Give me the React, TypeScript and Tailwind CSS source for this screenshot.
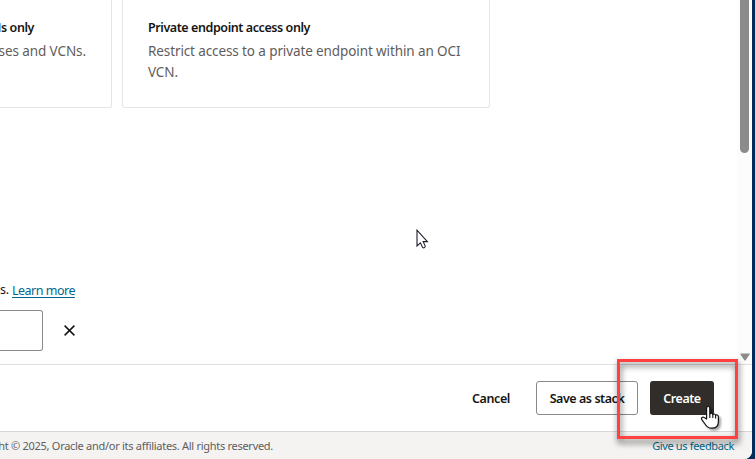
import React from "react";

function ArrowCursor() {
  return (
    <svg className="absolute left-[416px] top-[229px]" width="14" height="21" viewBox="0 0 14 21">
      <path d="M1 1.2V17L4.4 13.8L6.6 18.4Q8.4 19.6 9.3 17.4L7.2 12.6H11.4Z" fill="#fff" stroke="#1d1d2b" strokeWidth="1.1" />
    </svg>
  );
}

function HandCursor() {
  return (
    <svg className="absolute left-[700px] top-[405px] drop-shadow-[2px_2px_1px_rgba(0,0,0,0.35)]" width="20" height="25" viewBox="0 0 20 25">
      <path
        d="M6.6 14V3.2C6.6 .9 9.8 .9 9.8 3.2V9.2C10.2 7.7 12.7 7.9 12.8 9.7C13.3 8.4 15.5 8.8 15.6 10.4C16.4 9.3 18.4 10 18.4 11.8V16.4C18.4 20.8 16 23.2 11.8 23.2C8 23.2 6.6 21.6 5 19L1.8 14.7C.6 12.8 2.7 11.5 4.2 12.6Z"
        fill="#fff" stroke="#111" strokeWidth="1.2" strokeLinejoin="round"
      />
      <path d="M9.8 9V13M12.8 9.8V13M15.6 10.5V13.4" stroke="#111" strokeWidth="1.1" />
    </svg>
  );
}

export default function App() {
  return (
    <div className="relative h-[459px] w-[755px] overflow-hidden bg-[#002b5c] font-['Noto_Sans','Open_Sans',sans-serif] text-[13px] text-[#161513]">
      <div className="flex h-[459px] w-[752px] flex-col overflow-hidden rounded-br-[8px] bg-white">
        <div className="flex h-[364px] shrink-0 justify-between">
          <main className="w-[737px] overflow-hidden">
            <div className="flex h-[108px] gap-[10px] whitespace-nowrap">
              <section className="flex w-[112px] flex-col items-end rounded-br-[3px] border-r border-b border-[#e4e4e4] pr-[25px]">
                <h2 className="mt-[18px] mr-[52px] text-[12.5px] leading-[20px] font-semibold tracking-[-0.42px]">Ns only</h2>
                <p className="mt-[3px] text-[13.5px] leading-[21px] tracking-[-0.09px] text-[#5f5d5b]">ses and VCNs.</p>
              </section>
              <section className="w-[368px] rounded-b-[3px] border-x border-b border-[#e4e4e4] pl-[25px]">
                <h2 className="mt-[18px] text-[12.5px] leading-[20px] font-semibold tracking-[-0.42px]">Private endpoint access only</h2>
                <p className="mt-[3px] text-[13.5px] leading-[21px] tracking-[-0.11px] text-[#5f5d5b]">
                  Restrict access to a private endpoint within an OCI<br />VCN.
                </p>
              </section>
            </div>
            <p className="mt-[172px] flex h-[20px] items-center gap-[5px] text-[12.5px]">
              <span className="w-[7px] tracking-[-0.3px]">s.</span>
              <a className="leading-[15px] tracking-[-0.5px] text-[#00688c] underline underline-offset-2">Learn more</a>
            </p>
            <div className="mt-[10px] flex items-center gap-[21px]">
              <div className="h-[41px] w-[43px] rounded-r-[3px] border-y border-r border-[#8b8987]" />
              <svg width="11" height="11" viewBox="0 0 11 11"><path d="M.6 .6L10.4 10.4M10.4 .6L.6 10.4" stroke="#161513" strokeWidth="1.5" /></svg>
            </div>
          </main>
          <aside className="flex w-[15px] flex-col items-center justify-between bg-[#fcfcfc] pb-[3px]">
            <div className="h-[153px] w-[9px] rounded-b-full bg-[#8b8b8b]" />
            <svg width="10" height="8" viewBox="0 0 10 8"><path d="M.8 .5H9.2Q10 .7 9.5 1.5L5.8 7Q5 8 4.2 7L.5 1.5Q0 .7 .8 .5Z" fill="#8b8b8b" /></svg>
          </aside>
        </div>
        <div className="flex h-[67px] shrink-0 items-center justify-end border-t border-[#e1dfdd] pr-[38px] text-[12.5px] font-semibold whitespace-nowrap">
          <button className="mr-[26px] w-[38px] pt-[2px] tracking-[-0.4px]">Cancel</button>
          <button className="mr-[12px] h-[34px] w-[102px] rounded-[3px] border border-[#8b8987] pt-[2px] text-center tracking-[-0.45px]">Save as stack</button>
          <button className="h-[34px] w-[64px] rounded-[3px] bg-[#312d2a] pt-[2px] text-white tracking-[-0.45px]">Create</button>
        </div>
        <footer className="flex h-[28px] shrink-0 items-center justify-between border-t border-[#d8d6d3] bg-[#f4f3f2] pt-[2px] pr-[18px] text-[11px] whitespace-nowrap">
          <div className="flex w-[273px] justify-end overflow-hidden tracking-[-0.285px] text-[#5f5d5b]">ht © 2025, Oracle and/or its affiliates. All rights reserved.</div>
          <a className="tracking-[-0.35px] text-[#00688c]">Give us feedback</a>
        </footer>
      </div>
      <ArrowCursor />
      <div className="absolute left-[617px] top-[359px] h-[80px] w-[121px] border-3 border-[#ff4141] drop-shadow-[1px_4px_3px_rgba(0,0,0,0.6)]" />
      <HandCursor />
    </div>
  );
}
